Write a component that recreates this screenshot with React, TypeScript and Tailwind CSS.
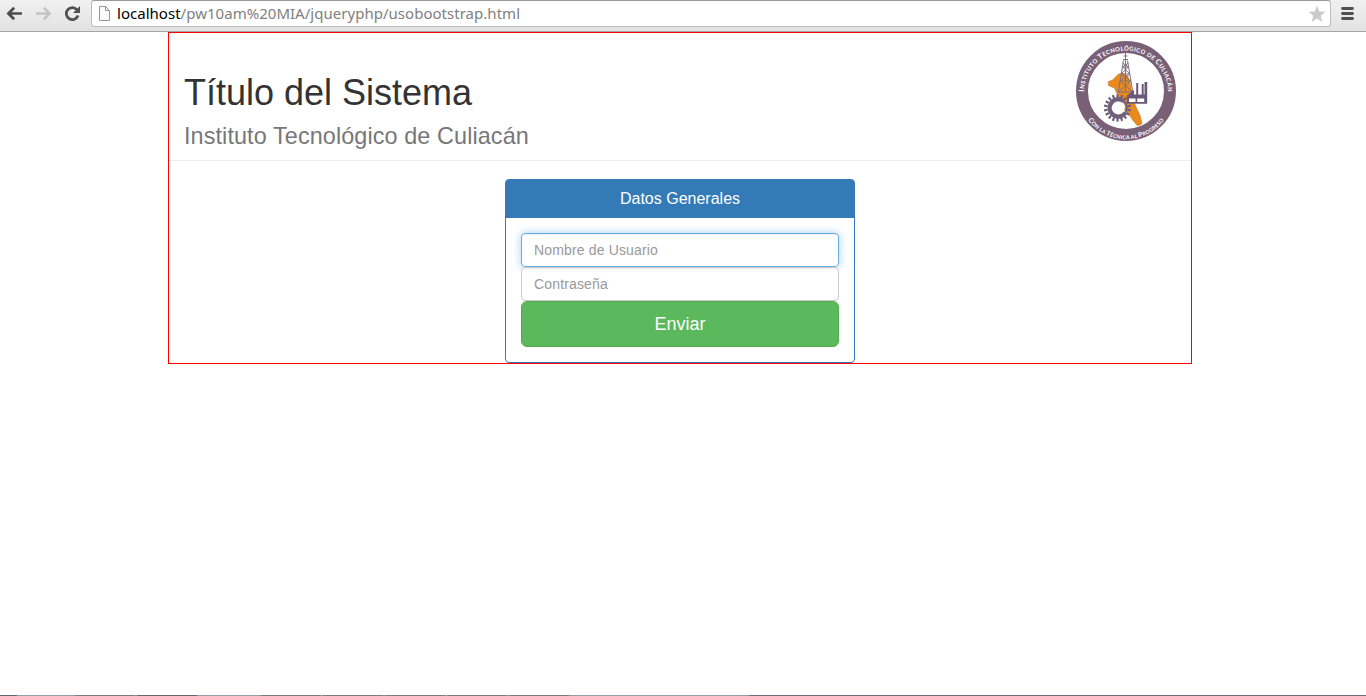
import React from "react";

const teeth = Array.from({ length: 18 }, (_, i) => i * 20);

function Logo() {
  return (
    <svg width="100" height="100" viewBox="0 0 100 100" className="block">
      <circle cx="50" cy="50" r="44" fill="#fff" stroke="#7a6076" strokeWidth="12" />
      <path d="M32.3 40.7l4.2-1.8L42 33.5l4-1.5 6 3.5 2.5 8 1.5 9 1.5 8 3.5 7.5 2.8 6 2.2 8-1.5 2-3.2.5-4.3-5-4-6-6-6-3.5-7-2.5-8-2.5-5.5-6-2.5z" fill="#ea8a1c" stroke="#bd742c" strokeWidth=".6" />
      <g transform="translate(41.5 67)">
        <ellipse cx="1" cy="-1" rx="6.5" ry="6" fill="#fff" />
        <path d="M8 4.5A8.6 8.6 0 1 1 6 -6.8" fill="none" stroke="#716079" strokeWidth="4.2" />
        <path d="M6 -6.8A8.6 8.6 0 0 1 8 4.5" fill="none" stroke="#716079" strokeWidth="2" />
        {teeth.map((a) => (
          <rect key={a} x="-1.1" y="-13.6" width="2.2" height="3.6" fill="#716079" transform={`rotate(${a})`} />
        ))}
      </g>
      <g fill="none" stroke="#817081" strokeWidth="1">
        <path d="M49.5 12v7M47.5 15h4M47 18.5h5M47.5 19.5L42 52M51.5 19.5L57 52M46 26h7M45 33h9M44 40h11M42.5 51h14M46.5 22l6 4-7.5 7 10 7-12.5 11M52.5 22l-6 4 7.5 7-10 7 12.5 11M49.5 19v32" />
      </g>
      <path d="M51 57v-2.5l7-5.5v4.5h2.2V42h2v11.5h3.5V43h2v10.5h.8V41h2.7v21.8H51z" fill="#6c5878" />
      <path d="M53 57.5h6.5v3.5H53zm8.2 0h7V61h-7z" fill="#fff" />
      <defs>
        <path id="upper" d="M8.1 54.4A42 42 0 1 1 91.9 54.4" />
        <path id="lower" d="M5.5 66A46.8 46.8 0 0 0 94.5 66" />
      </defs>
      <g fill="#fff" fontFamily="Lato, sans-serif" fontWeight="700">
        <text fontSize="5.9">
          <textPath href="#upper" startOffset="50%" textAnchor="middle" textLength="130">
            <tspan fontSize="7.4">I</tspan>NSTITUTO <tspan fontSize="7.4">T</tspan>ECNOLÓGICO DE <tspan fontSize="7.4">C</tspan>ULIACÁN
          </textPath>
        </text>
        <text fontSize="5.3">
          <textPath href="#lower" startOffset="50%" textAnchor="middle" textLength="88">
            <tspan fontSize="6.6">C</tspan>ON LA <tspan fontSize="6.6">T</tspan>ÉCNICA AL <tspan fontSize="6.6">P</tspan>ROGRESO
          </textPath>
        </text>
      </g>
    </svg>
  );
}

function BrowserBar() {
  return (
    <header className="flex h-8 items-start border-b border-[#a5a5a5] bg-linear-to-b from-[#f1f1f1] to-[#e2e2e2]">
      <svg width="91" height="30" viewBox="0 0 91 30" fill="none" className="shrink-0">
        <path d="M22 13.5H9M14.2 7.7L8.4 13.5l5.8 5.8" stroke="#4d4d4d" strokeWidth="2.7" />
        <path d="M36 13.5h13M43.8 7.7l5.8 5.8-5.8 5.8" stroke="#c4c4c4" strokeWidth="2.7" />
        <path d="M77 9.8A6 6 0 1 0 78 15.5" stroke="#505050" strokeWidth="2.7" />
        <path d="M80 6v7h-7z" fill="#505050" />
      </svg>
      <div className="flex h-[27px] w-[1240px] shrink-0 items-center rounded-[3px] border border-[#bcbcbc] border-t-[#999] bg-white">
        <svg width="25" height="25" viewBox="0 0 25 25" className="shrink-0">
          <path d="M7.5 5.5h6l4 4v10h-10zM13.5 5.5v4h4" fill="#fafafa" stroke="#969696" />
        </svg>
        <p className="grow pb-px font-['Noto_Sans',sans-serif] text-[15px] leading-[24px] tracking-[0.025px] whitespace-nowrap text-[#808080]">
          <span className="text-black">localhost</span>/pw10am%20MIA/jqueryphp/usobootstrap.html
        </p>
        <svg width="18" height="18" viewBox="0 0 18 18" className="mr-[4px]">
          <path d="M9 .7l2.3 5.7 6.2.4-4.8 4 1.6 6.1L9 13.5l-5.3 3.4 1.6-6.1-4.8-4 6.2-.4z" fill="#cbcbcb" />
        </svg>
      </div>
      <svg width="32" height="30" viewBox="0 0 32 30" className="shrink-0">
        <path d="M11.5 8.5h10M11.5 13.5h10M11.5 18.5h10" stroke="#505050" strokeWidth="2.8" strokeLinecap="round" />
      </svg>
    </header>
  );
}

export default function App() {
  return (
    <div className="flex h-[696px] w-full flex-col overflow-hidden bg-white font-['Liberation_Sans',Arial,sans-serif] text-[#333]">
      <BrowserBar />
      <main className="ml-[168px] h-[332px] w-[1024px] border border-[#ff0000]">
        <div className="flex h-[128px] justify-between border-b border-[#eee] pr-[15px] pl-[15px]">
          <div>
            <h1 className="mt-[40px] text-[36px] leading-[40px] font-medium">Título del Sistema</h1>
            <p className="mt-[10px] text-[23.4px] leading-[26px] tracking-[0.1px] text-[#777]">Instituto Tecnológico de Culiacán</p>
          </div>
          <div className="pt-[8px]"><Logo /></div>
        </div>
        <section className="mx-auto mt-[18px] h-[184px] w-[350px] rounded-[4px] border border-[#337ab7]">
          <h2 className="flex h-[38px] items-center justify-center bg-[#337ab7] text-[16px] text-white">Datos Generales</h2>
          <form className="p-[15px]" onSubmit={(e) => e.preventDefault()}>
            <input aria-label="Nombre de Usuario" placeholder="Nombre de Usuario" className="relative block h-[34px] w-full rounded-[4px] border border-[#66afe9] px-3 text-[14px] tracking-[0.15px] shadow-[inset_0_1px_1px_rgba(0,0,0,0.075),0_0_8px_rgba(102,175,233,0.6)] outline-none placeholder:text-[#999]" />
            <input aria-label="Contraseña" type="password" placeholder="Contraseña" className="relative block h-[34px] w-full rounded-[4px] border border-[#ccc] bg-white px-3 text-[14px] tracking-[0.15px] shadow-[inset_0_1px_1px_rgba(0,0,0,0.075)] outline-none placeholder:text-[#999]" />
            <button className="relative block h-[46px] w-full rounded-[6px] border border-[#4cae4c] bg-[#5cb85c] text-[18px] text-white">Enviar</button>
          </form>
        </section>
      </main>
      <footer className="mt-auto flex h-px bg-[#929dab]">
        <div className="w-[17px] bg-[#626873]" />
        <div className="ml-[58px] w-[60px] bg-[#797d83]" />
        <div className="ml-[2px] w-[60px] bg-[#66666e]" />
        <div className="ml-[64px] w-[60px] bg-[#797d83]" />
        <div className="ml-[2px] w-[60px] bg-[#797d83]" />
        <div className="ml-[2px] w-[60px] bg-[#797d83]" />
        <div className="ml-[2px] w-[60px] bg-[#797d83]" />
        <div className="ml-[2px] w-[60px] bg-[#797d83]" />
        <div className="ml-[180px] grow bg-[#706d80]" />
      </footer>
    </div>
  );
}
